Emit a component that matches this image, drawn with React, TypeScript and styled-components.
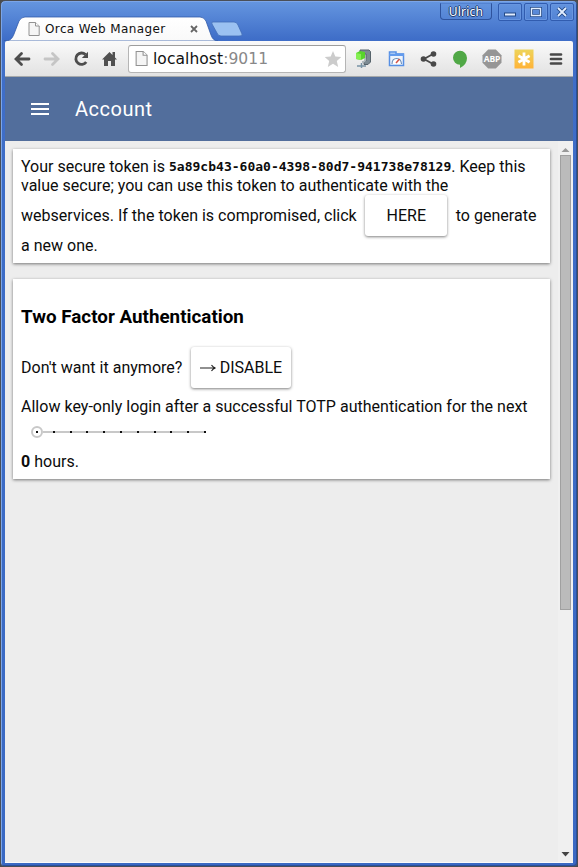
import React from 'react';
import styled, { createGlobalStyle } from 'styled-components';

const Global = createGlobalStyle`
  * { box-sizing: border-box; }
  body { margin: 0; background: #4b4b4b; overflow: hidden; }
`;

const Window = styled.div`
  width: 578px;
  height: 867px;
  display: flex;
  flex-direction: column;
  padding: 0 4px 3px;
  border: 1px solid #4a4f58;
  border-radius: 5px 5px 4px 4px;
  background: linear-gradient(#6596e0 0, #3f6ec8 38px, #3a69c3 100%);
  box-shadow: inset 1px 1px 0 #7ba5e8, inset -1px -1px 0 #2a4f9c;
  overflow: hidden;
`;

const TabStrip = styled.div`
  position: relative;
  height: 40px;
  flex: none;
  display: flex;
  justify-content: flex-end;
`;

const StripArt = styled.svg`
  position: absolute;
  left: -1px;
  top: 0;
`;

const Tab = styled.div`
  position: absolute;
  left: 23px;
  top: 17px;
  width: 170px;
  height: 22px;
  display: flex;
  align-items: center;
  font: 12px/20px "DejaVu Sans", sans-serif;
  letter-spacing: 0.38px;
  color: #111;
  white-space: pre;
`;

const TabTitle = styled.span`
  flex: 1;
  margin-left: 5px;
`;

const WindowControls = styled.div`
  display: flex;
  gap: 2px;
  padding-top: 2px;
  margin-right: -1px;
`;

const UserBadge = styled.div`
  width: 52px;
  height: 17px;
  margin-right: 4px;
  border: 1px solid #2e539d;
  border-top-color: #5482d0;
  border-radius: 0 0 4px 4px;
  font: 12px/15px "Noto Sans", sans-serif;
  letter-spacing: 0.2px;
  text-align: center;
  color: #fff;
  text-shadow: 1px 0 #243d70, -1px 0 #243d70, 0 1px #243d70, 0 -1px #243d70;
`;

const ControlButton = styled.div`
  width: 24px;
  height: 18px;
  border: 1px solid #315caf;
  border-radius: 2px;
  box-shadow: inset 0 0 0 1px #6795df;
  svg { display: block; }
`;

const Toolbar = styled.div`
  height: 36px;
  flex: none;
  display: flex;
  align-items: center;
  padding: 0 8px 0 9px;
  border-bottom: 1px solid #a5a8aa;
  background: linear-gradient(#fafafa, #e2e2e2);
  border-radius: 2px 2px 0 0;
`;

const ToolIcon = styled.svg<{ $gap: number }>`
  flex: none;
  width: 20px;
  height: 20px;
  margin-right: ${(p) => p.$gap}px;
`;

const AddressBar = styled.div`
  width: 218px;
  height: 28px;
  flex: none;
  display: flex;
  align-items: center;
  margin-right: 8px;
  padding: 0 3px 0 6px;
  border: 1px solid #b5b5b5;
  border-top-color: #9d9d9d;
  border-radius: 3px;
  background: #fff;
  font: 15.5px/24px "DejaVu Sans", sans-serif;
  letter-spacing: 0.06px;
  color: #111;
`;

const Url = styled.span`
  flex: 1;
  margin-left: 5px;
  span { color: #888; }
`;

const AppHeader = styled.header`
  height: 64px;
  flex: none;
  display: flex;
  align-items: center;
  gap: 26px;
  padding-left: 26px;
  background: #526e9c;
  color: #fff;
  font: 20px/24px Roboto, sans-serif;
  letter-spacing: 0.5px;
`;

const Viewport = styled.div`
  flex: 1;
  display: flex;
  min-height: 0;
  background: #ededed;
  border-bottom: 1px solid #fafafa;
`;

const Cards = styled.main`
  flex: 1;
  display: flex;
  flex-direction: column;
  gap: 16px;
  padding: 8px 8px 0;
  font: 16px/19px Roboto, sans-serif;
  letter-spacing: 0.015px;
  color: #0c0c0c;
`;

const Card = styled.section`
  padding: 8px;
  background: #fff;
  box-shadow: 0 1px 3px rgba(0, 0, 0, 0.5);
`;

const Line = styled.div<{ $height?: number }>`
  height: ${(p) => p.$height ?? 19}px;
  display: flex;
  align-items: center;
  white-space: pre;
`;

const Token = styled.b`
  font: bold 13px/19px "DejaVu Sans Mono", monospace;
`;

const Heading = styled.h3`
  margin: 0;
  height: 59px;
  font: bold 18.8px/60px Roboto, sans-serif;
  color: #000;
`;

const PaperButton = styled.button<{ $width: number }>`
  width: ${(p) => p.$width}px;
  height: 41px;
  margin: 0 8.5px;
  padding: 0;
  display: flex;
  align-items: center;
  justify-content: center;
  gap: 3px;
  border: 0;
  border-radius: 3px;
  background: #fff;
  box-shadow: 0 1px 3px rgba(0, 0, 0, 0.5);
  font: 16px/19px Roboto, sans-serif;
  color: #0c0c0c;
`;

const LoginWindow = styled(Line)`
  margin: 4px 0 -5px;
`;

const Slider = styled.svg`
  display: block;
  width: 200px;
  height: 37px;
`;

const Scrollbar = styled.div`
  width: 15px;
  display: flex;
  flex-direction: column;
  align-items: center;
  padding: 6px 1px 5px 0;
  background: #f0f0f0;
`;

const Thumb = styled.div`
  width: 11px;
  height: 455px;
  margin: 3px 0 auto;
  border: 1px solid #a0a0a0;
  background: #bbb;
`;

const PageIcon = ({ size }: { size: number }) => (
  <svg width={size} height={size + 2} viewBox="0 0 12 14">
    <path d="M1 .5H7.5L11.2 4V13.5H1Z" fill="#f5f5f5" stroke="#929292" />
    <path d="M7.5.5V4H11.2" fill="#fff" stroke="#929292" />
  </svg>
);

const ticks = Array.from({ length: 11 }, (_, i) => i);

export default function App() {
  return (
    <>
      <Global />
      <Window>
        <TabStrip>
          <StripArt width="240" height="40" viewBox="4 1 240 40">
            <defs>
              <linearGradient id="tab" x1="0" y1="0" x2="0" y2="1">
                <stop stopColor="#fff" />
                <stop offset="1" stopColor="#f9f9f9" />
              </linearGradient>
            </defs>
            <path d="M4 41C10 41 12 39 14 34L19 21Q21 17 25 17H200Q204 17 206 21L211 35Q213 41 218 41Z" fill="url(#tab)" stroke="#315aa9" strokeWidth=".8" />
            <path d="M213 22H234Q237 22 238 25L242 34Q243 36 239 36H221Q218 36 217 33L212 24Q211 22 213 22Z" fill="#9bc1f1" stroke="#416db8" strokeWidth=".8" />
          </StripArt>
          <Tab>
            <PageIcon size={12} />
            <TabTitle>Orca Web Manager</TabTitle>
            <svg width="8" height="8" viewBox="0 0 8 8"><path d="M1 1L7 7M7 1L1 7" stroke="#666" strokeWidth="1.8" /></svg>
          </Tab>
          <WindowControls>
            <UserBadge>Ulrich</UserBadge>
            <ControlButton><svg width="22" height="16"><path d="M5 10.5H17" stroke="#234986" strokeWidth="4" /><path d="M6 10.5H16" stroke="#e2eeff" strokeWidth="2" /></svg></ControlButton>
            <ControlButton><svg width="22" height="16"><rect x="6.5" y="4.5" width="9" height="7" fill="none" stroke="#234986" strokeWidth="3" /><path d="M6.5 4.5H15.5V11.5H6.5Z" fill="none" stroke="#e2eeff" strokeWidth="1.4" /></svg></ControlButton>
            <ControlButton><svg width="22" height="16"><path d="M7 4L15 12M15 4L7 12" stroke="#234986" strokeWidth="3.8" /><path d="M7 4L15 12M15 4L7 12" stroke="#e2eeff" strokeWidth="1.8" /></svg></ControlButton>
          </WindowControls>
        </TabStrip>

        <Toolbar>
          <ToolIcon $gap={9} viewBox="0 0 20 20"><path d="M15.5 10H3M8 4.5L2.5 10L8 15.5" fill="none" stroke="#4d4d4d" strokeWidth="2.8" transform="translate(-.5)" strokeLinecap="round" /></ToolIcon>
          <ToolIcon $gap={9} viewBox="0 0 20 20"><path d="M2 10H14M9.5 4.5L15 10L9.5 15.5" fill="none" stroke="#c5c5c5" strokeWidth="2.8" strokeLinecap="round" /></ToolIcon>
          <ToolIcon $gap={9} viewBox="0 0 20 20"><path d="M13.5 5.6A5.7 5.7 0 1 0 14.2 13" fill="none" stroke="#4d4d4d" strokeWidth="2.8" /><path d="M16 2.8V9H9.8Z" fill="#4d4d4d" /></ToolIcon>
          <ToolIcon $gap={7} viewBox="0 0 20 20"><path d="M1 10.5L8.5 3L11.5 6V3H14V8.5L16 10.5H14V17H10V12H7V17H3V10.5Z" fill="#505050" /></ToolIcon>
          <AddressBar>
            <PageIcon size={13} />
            <Url>localhost<span>:9011</span></Url>
            <svg width="18" height="18" viewBox="0 0 18 18"><path d="M9 1L11.3 6.5L17.3 7L12.8 11L14.2 17L9 13.8L3.8 17L5.2 11L.7 7L6.7 6.5Z" fill="#ccc" /></svg>
          </AddressBar>
          <ToolIcon $gap={13} viewBox="0 0 20 20">
            <path d="M6 1H15L16.5 2.5V13L14 15.5H10V12H12V5H6Z" fill="#7c8a93" stroke="#56636b" />
            <path d="M8 13Q12 13 11 9" fill="none" stroke="#aeb7bc" strokeWidth="2" />
            <path d="M2 4L6 2L11 3V9L7 11L2 10Z" fill="#58d42b" /><path d="M2 4L7 5V11L2 10Z" fill="#85ef52" />
            <path d="M3 17H12M7.5 14V19" stroke="#7893a5" strokeWidth="1.5" />
          </ToolIcon>
          <ToolIcon $gap={12} viewBox="0 0 20 20">
            <path d="M2.5 4.5V3H9V5H16.5V16.5H2.5Z" fill="#eef4fc" stroke="#568fe4" strokeWidth="1.5" />
            <path d="M2 7H17V4.5H2Z" fill="#639bed" />
            <path d="M5 15Q5 9.5 9.7 9.5Q14 9.5 14.5 15" fill="#fff" stroke="#688cb8" strokeWidth="1.1" /><path d="M9 14L12.5 10" stroke="#d45345" strokeWidth="1.5" />
          </ToolIcon>
          <ToolIcon $gap={11} viewBox="0 0 20 20"><path d="M14 5L5 10L14 15" fill="none" stroke="#484848" strokeWidth="1.8" /><circle cx="14.5" cy="5" r="2.8" fill="#484848" /><circle cx="4.5" cy="10" r="2.8" fill="#484848" /><circle cx="14.5" cy="15" r="2.8" fill="#484848" /></ToolIcon>
          <ToolIcon $gap={12} viewBox="0 0 20 20"><path d="M10 1.8A7 7 0 0 0 10 15.8V19Q17 15.5 17 9A7 7 0 0 0 10 1.8Z" fill="#50a846" /></ToolIcon>
          <ToolIcon $gap={12} viewBox="0 0 20 20"><path d="M6.2.5H13.8L19.5 6.2V13.8L13.8 19.5H6.2L.5 13.8V6.2Z" fill="#969696" /><text x="10" y="13.3" textAnchor="middle" fontFamily="Open Sans, sans-serif" fontSize="8.5" fontWeight="bold" letterSpacing="-.2" fill="#fff">ABP</text></ToolIcon>
          <ToolIcon $gap={12} viewBox="0 0 20 20"><defs><linearGradient id="gold" x1="0" y1="0" x2="0" y2="1"><stop stopColor="#eed45a" /><stop offset="1" stopColor="#ffb338" /></linearGradient></defs><path d="M.5.5H19.5V19.5H.5Z" fill="url(#gold)" /><path d="M10 3.5V16.5M4.4 6.8L15.6 13.2M15.6 6.8L4.4 13.2" stroke="#fff" strokeWidth="2.8" /></ToolIcon>
          <ToolIcon $gap={0} viewBox="0 0 20 20"><path d="M5 5.5H15M5 10H15M5 14.5H15" stroke="#484848" strokeWidth="2.7" strokeLinecap="round" /></ToolIcon>
        </Toolbar>

        <AppHeader>
          <svg width="18" height="12" viewBox="0 0 18 12"><path d="M0 1H18M0 6H18M0 11H18" stroke="#fff" strokeWidth="2" /></svg>
          <span>Account</span>
        </AppHeader>

        <Viewport>
          <Cards>
            <Card>
              <Line>Your secure token is <Token>5a89cb43-60a0-4398-80d7-941738e78129</Token>. Keep this</Line>
              <Line>value secure; you can use this token to authenticate with the</Line>
              <Line $height={41}>webservices. If the token is compromised, click<PaperButton $width={82}>HERE</PaperButton>to generate</Line>
              <Line>a new one.</Line>
            </Card>
            <Card>
              <Heading>Two Factor Authentication</Heading>
              <Line $height={42}>Don't want it anymore?<PaperButton $width={100}>
                <svg width="17" height="10" viewBox="0 0 17 10"><path d="M0 6H15M11.5 3Q13 5.5 15.5 6Q13 6.5 11.5 9" fill="none" stroke="#222" strokeWidth="1.1" /></svg>
                DISABLE
              </PaperButton></Line>
              <LoginWindow $height={28}>Allow key-only login after a successful TOTP authentication for the next</LoginWindow>
              <Slider viewBox="0 0 200 37">
                <path d="M22 17H184" stroke="#c8c8c8" strokeWidth="2" />
                <circle cx="16" cy="17" r="5" fill="#fff" stroke="#c8c8c8" strokeWidth="2" />
                {ticks.map((i) => <rect key={i} x={Math.round(15 + i * 16.8)} y="16" width="2" height="2" fill="#111" />)}
              </Slider>
              <Line><b>0</b> hours.</Line>
            </Card>
          </Cards>
          <Scrollbar>
            <svg width="9" height="5" viewBox="0 0 9 5"><path d="M.5 5L4.5 1L8.5 5Z" fill="#999" /></svg>
            <Thumb />
            <svg width="9" height="5" viewBox="0 0 9 5"><path d="M.5 0H8.5L4.5 4.5Z" fill="#444" /></svg>
          </Scrollbar>
        </Viewport>
      </Window>
    </>
  );
}
